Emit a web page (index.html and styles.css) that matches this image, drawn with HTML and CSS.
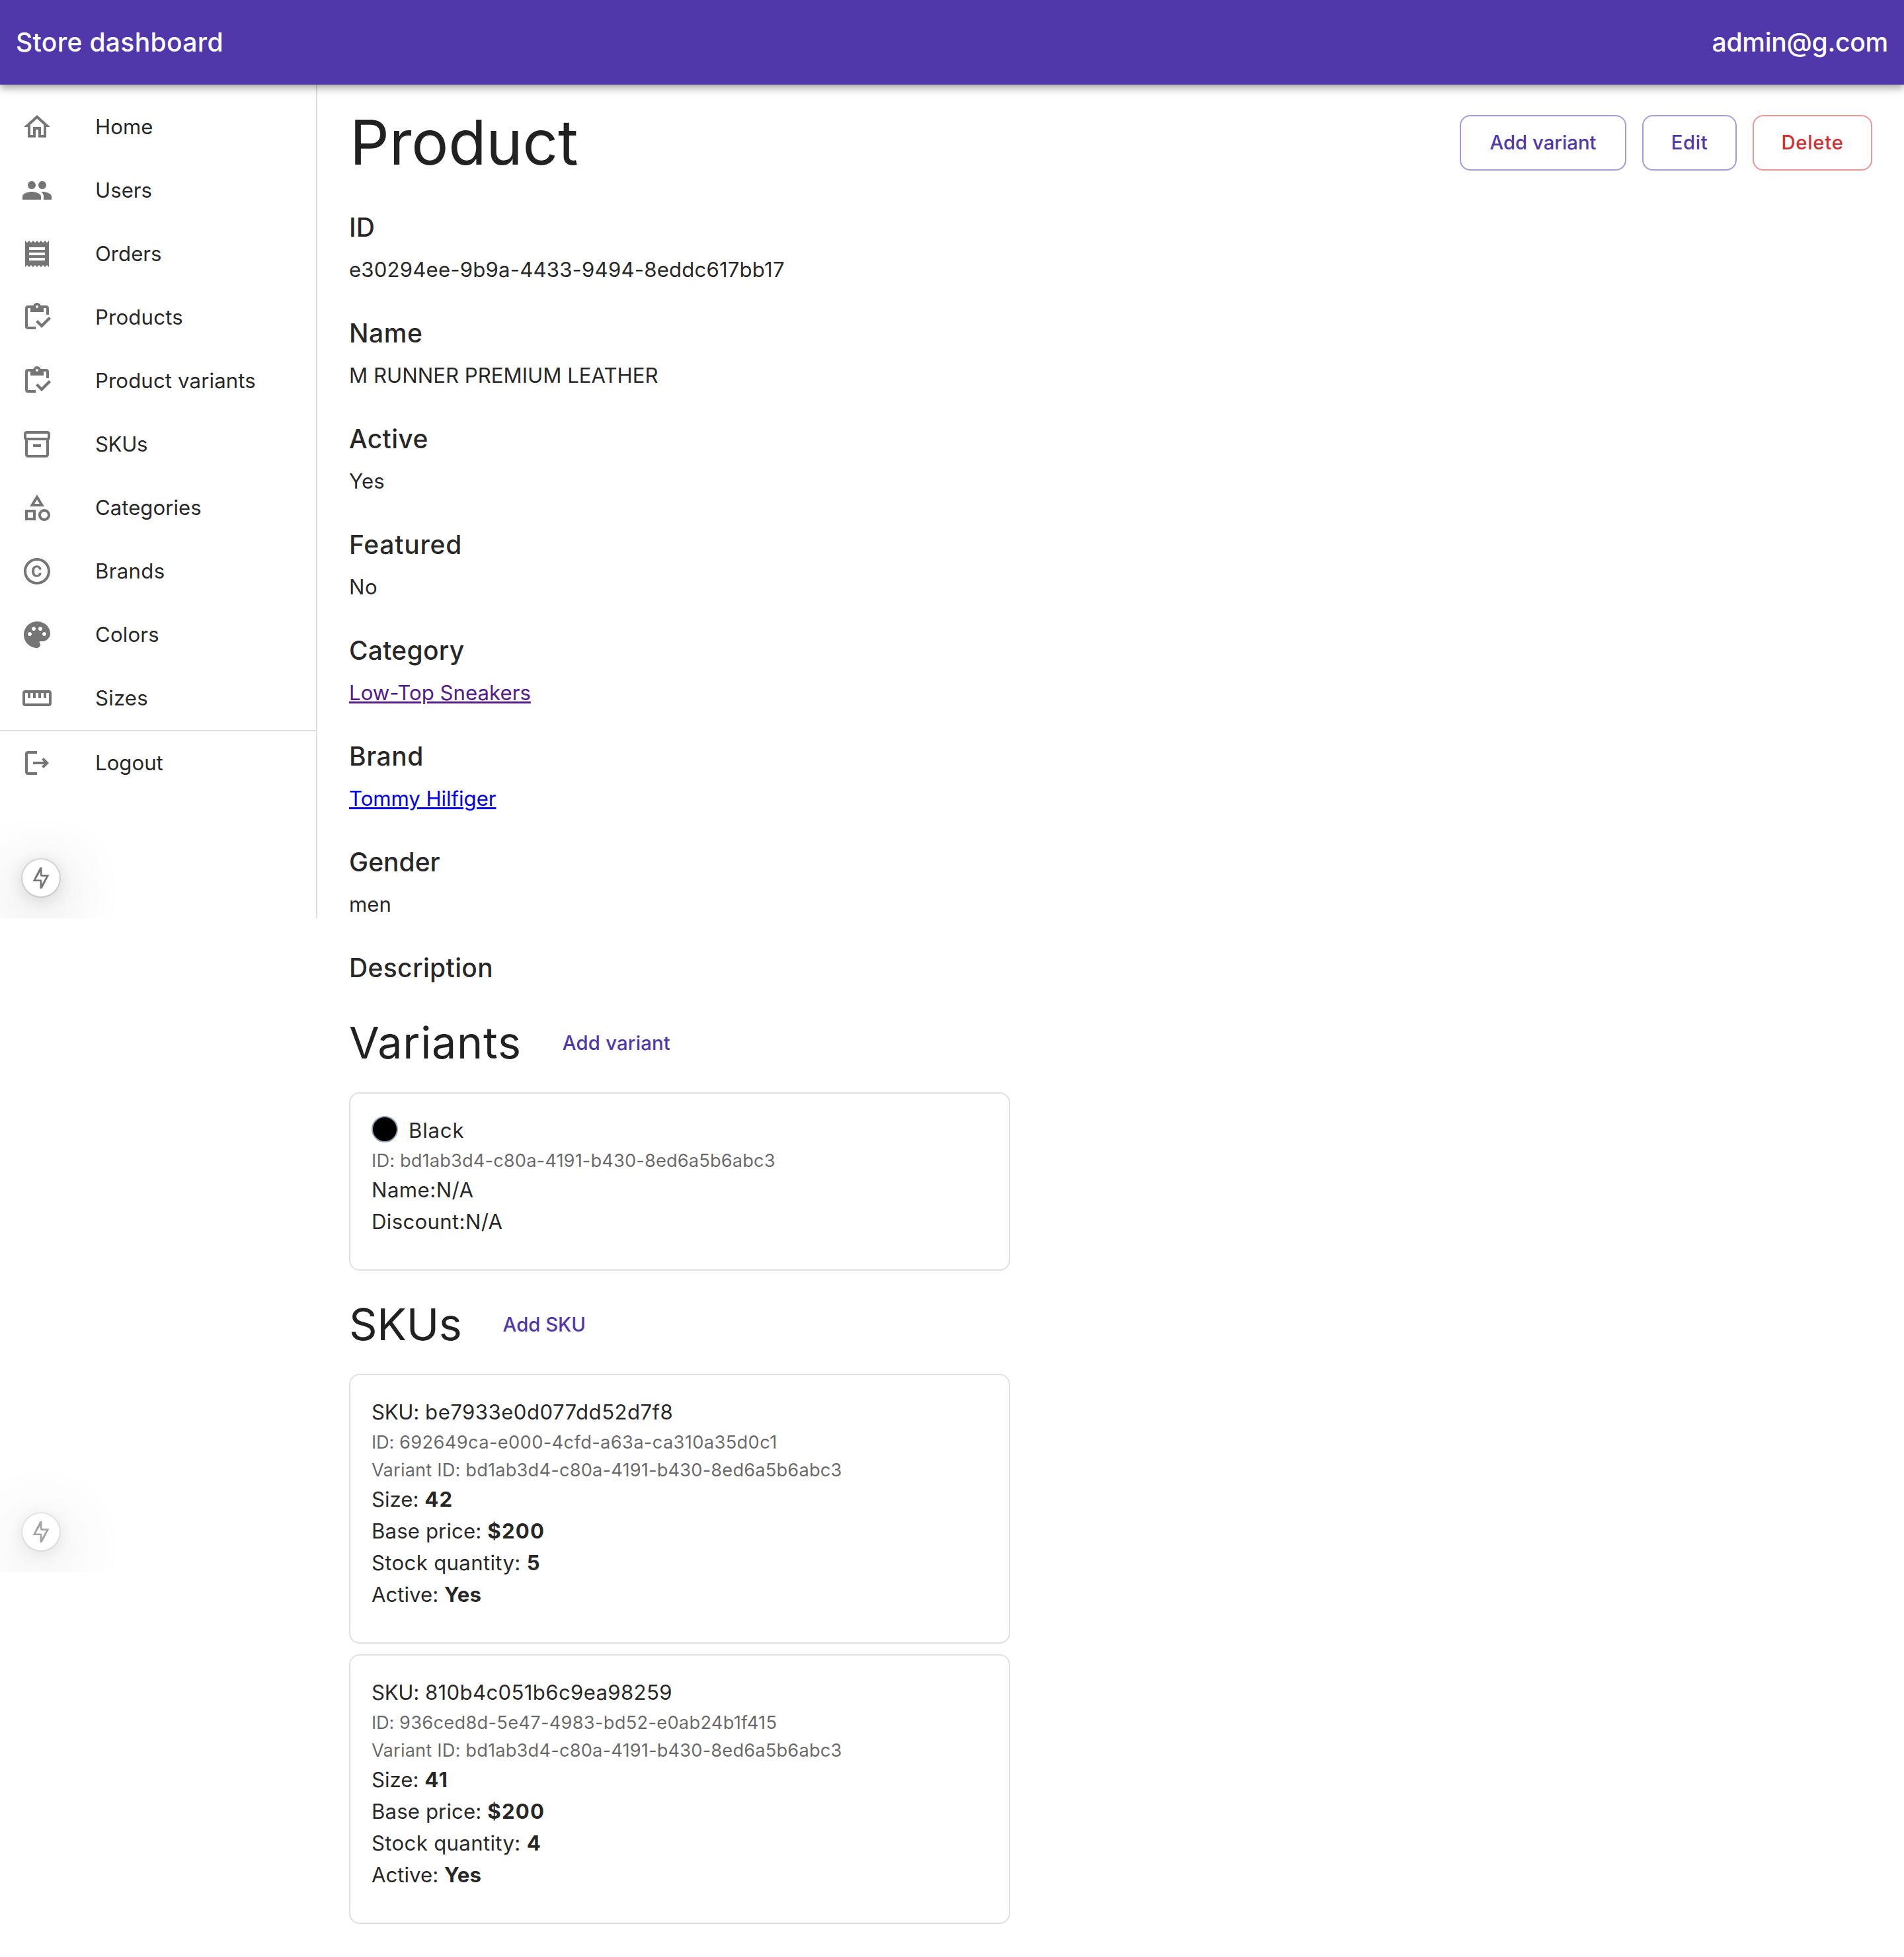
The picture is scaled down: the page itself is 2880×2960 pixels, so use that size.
FILE: index.html
```html
<!DOCTYPE html>
<html lang="en">
<head>
<meta charset="utf-8">
<title>Store dashboard</title>
<link rel="stylesheet" href="styles.css">
</head>
<body>
<header class="app-bar">
  <span class="app-title track-9">Store dashboard</span>
  <span class="app-user">admin@g.com</span>
</header>

<div class="layout">
  <nav class="sidebar">
    <ul class="nav-list">
      <li class="nav-item"><svg class="icon" viewBox="0 0 24 24"><path d="m12 5.69 5 4.5V18h-2v-6H9v6H7v-7.81l5-4.5M12 3 2 12h3v8h6v-6h2v6h6v-8h3L12 3z"/></svg><span>Home</span></li>
      <li class="nav-item"><svg class="icon" viewBox="0 0 24 24"><path d="M16 11c1.66 0 2.99-1.34 2.99-3S17.66 5 16 5c-1.66 0-3 1.34-3 3s1.34 3 3 3zm-8 0c1.66 0 2.99-1.34 2.99-3S9.66 5 8 5C6.34 5 5 6.34 5 8s1.34 3 3 3zm0 2c-2.33 0-7 1.17-7 3.5V19h14v-2.5c0-2.33-4.67-3.5-7-3.5zm8 0c-.29 0-.62.02-.97.05 1.16.84 1.97 1.97 1.97 3.45V19h6v-2.5c0-2.33-4.67-3.5-7-3.5z"/></svg><span>Users</span></li>
      <li class="nav-item"><svg class="icon" viewBox="0 0 24 24"><path d="M18 17H6v-2h12v2zm0-4H6v-2h12v2zm0-4H6V7h12v2zM3 22l1.5-1.5L6 22l1.5-1.5L9 22l1.5-1.5L12 22l1.5-1.5L15 22l1.5-1.5L18 22l1.5-1.5L21 22V2l-1.5 1.5L18 2l-1.5 1.5L15 2l-1.5 1.5L12 2l-1.5 1.5L9 2 7.5 3.5 6 2 4.5 3.5 3 2v20z"/></svg><span>Orders</span></li>
      <li class="nav-item"><svg class="icon" viewBox="0 0 24 24"><path d="M5 5h2v3h10V5h2v5h2V5c0-1.1-.9-2-2-2h-4.18C14.4 1.84 13.3 1 12 1s-2.4.84-2.82 2H5c-1.1 0-2 .9-2 2v14c0 1.1.9 2 2 2h6v-2H5V5zm7-2c.55 0 1 .45 1 1s-.45 1-1 1-1-.45-1-1 .45-1 1-1z"/><path d="M21 11.5 15.51 17l-3.01-3-1.5 1.5 4.51 4.5 7-7z"/></svg><span class="track-5">Products</span></li>
      <li class="nav-item"><svg class="icon" viewBox="0 0 24 24"><path d="M5 5h2v3h10V5h2v5h2V5c0-1.1-.9-2-2-2h-4.18C14.4 1.84 13.3 1 12 1s-2.4.84-2.82 2H5c-1.1 0-2 .9-2 2v14c0 1.1.9 2 2 2h6v-2H5V5zm7-2c.55 0 1 .45 1 1s-.45 1-1 1-1-.45-1-1 .45-1 1-1z"/><path d="M21 11.5 15.51 17l-3.01-3-1.5 1.5 4.51 4.5 7-7z"/></svg><span class="track-4">Product variants</span></li>
      <li class="nav-item"><svg class="icon" viewBox="0 0 24 24"><path d="M20 2H4c-1 0-2 .9-2 2v3.01c0 .72.43 1.34 1 1.69V20c0 1.1 1.1 2 2 2h14c.9 0 2-.9 2-2V8.7c.57-.35 1-.97 1-1.69V4c0-1.1-1-2-2-2zm-1 18H5V9h14v11zm1-13H4V4h16v3z"/><path d="M9 12h6v2H9z"/></svg><span class="track-n10">SKUs</span></li>
      <li class="nav-item"><svg class="icon" viewBox="0 0 24 24"><path d="m12 2-5.5 9h11L12 2zm0 3.84L13.93 9h-3.87L12 5.84zM17.5 13c-2.49 0-4.5 2.01-4.5 4.5s2.01 4.5 4.5 4.5 4.5-2.01 4.5-4.5-2.01-4.5-4.5-4.5zm0 7c-1.38 0-2.5-1.12-2.5-2.5s1.12-2.5 2.5-2.5 2.5 1.12 2.5 2.5-1.12 2.5-2.5 2.5zM3 21.5h8v-8H3v8zm2-6h4v4H5v-4z"/></svg><span>Categories</span></li>
      <li class="nav-item"><svg class="icon" viewBox="0 0 24 24"><path d="M10.08 10.86c.05-.33.16-.62.3-.87s.34-.46.59-.62c.24-.15.54-.22.91-.23.23.01.44.05.63.13.2.09.38.21.52.36s.25.33.34.53.13.42.14.64h1.79c-.02-.47-.11-.9-.28-1.29s-.4-.73-.7-1.01-.66-.5-1.08-.66-.88-.23-1.39-.23c-.65 0-1.22.11-1.7.34s-.88.53-1.2.92-.56.84-.71 1.36S8 11.29 8 11.87v.27c0 .58.08 1.12.23 1.64s.39.97.71 1.35.72.69 1.2.91 1.05.34 1.7.34c.47 0 .91-.08 1.32-.23s.77-.36 1.08-.63.56-.58.74-.94.29-.74.3-1.15h-1.79c-.01.21-.06.4-.15.58s-.21.33-.36.46-.32.23-.52.3c-.19.07-.39.09-.6.1-.36-.01-.66-.08-.89-.23-.25-.16-.45-.37-.59-.62s-.25-.55-.3-.88-.08-.67-.08-1v-.27c0-.35.03-.68.08-1.01zM12 2C6.48 2 2 6.48 2 12s4.48 10 10 10 10-4.48 10-10S17.52 2 12 2zm0 18c-4.41 0-8-3.59-8-8s3.59-8 8-8 8 3.59 8 8-3.59 8-8 8z"/></svg><span class="track-10">Brands</span></li>
      <li class="nav-item"><svg class="icon" viewBox="0 0 24 24"><path d="M12 2C6.49 2 2 6.49 2 12s4.49 10 10 10c1.38 0 2.5-1.12 2.5-2.5 0-.61-.23-1.2-.64-1.67-.08-.1-.13-.21-.13-.33 0-.28.22-.5.5-.5H16c3.31 0 6-2.69 6-6 0-4.96-4.49-9-10-9zm5.5 11c-.83 0-1.5-.67-1.5-1.5s.67-1.5 1.5-1.5 1.5.67 1.5 1.5-.67 1.5-1.5 1.5zm-3-4c-.83 0-1.5-.67-1.5-1.5S13.67 6 14.5 6s1.5.67 1.5 1.5S15.33 9 14.5 9zM5 11.5c0-.83.67-1.5 1.5-1.5s1.5.67 1.5 1.5S7.33 13 6.5 13 5 12.33 5 11.5zm6-4c0 .83-.67 1.5-1.5 1.5S8 8.33 8 7.5 8.67 6 9.5 6s1.5.67 1.5 1.5z"/></svg><span class="track-5">Colors</span></li>
      <li class="nav-item"><svg class="icon" viewBox="0 0 24 24"><path d="M21 6H3c-1.1 0-2 .9-2 2v8c0 1.1.9 2 2 2h18c1.1 0 2-.9 2-2V8c0-1.1-.9-2-2-2zm0 10H3V8h2v4h2V8h2v4h2V8h2v4h2V8h2v4h2V8h2v8z"/></svg><span class="track-5">Sizes</span></li>
      <li class="nav-item nav-item-divided"><svg class="icon" viewBox="0 0 24 24"><path d="m17 8-1.41 1.41L17.17 11H9v2h8.17l-1.58 1.58L17 16l4-4-4-4zM5 5h7V3H5c-1.1 0-2 .9-2 2v14c0 1.1.9 2 2 2h7v-2H5V5z"/></svg><span>Logout</span></li>
    </ul>
    <div class="indicator"><svg class="bolt" viewBox="0 0 56 56"><path fill-rule="evenodd" d="M26.5 12h3v11h11l-11 21h-3V33h-11zM27 18.2 20 30.4h7.3c1.2 0 2 .8 2 2v5.4L36 25.7h-6.9c-1.2 0-2.1-.9-2.1-2z"/></svg></div>
  </nav>

  <main class="content">
    <div class="page-head">
      <h1 class="page-title">Product</h1>
      <div class="actions">
        <button class="btn btn-outlined btn-add">Add variant</button>
        <button class="btn btn-outlined btn-edit track-20">Edit</button>
        <button class="btn btn-outlined btn-danger track-25">Delete</button>
      </div>
    </div>

    <section class="field"><h2 class="label">ID</h2><p class="value track-5">e30294ee-9b9a-4433-9494-8eddc617bb17</p></section>
    <section class="field"><h2 class="label track-15">Name</h2><p class="value">M RUNNER PREMIUM LEATHER</p></section>
    <section class="field"><h2 class="label track-9">Active</h2><p class="value track-5">Yes</p></section>
    <section class="field"><h2 class="label track-20">Featured</h2><p class="value track-15">No</p></section>
    <section class="field"><h2 class="label track-6">Category</h2><p class="value"><a class="link-visited" href="#">Low-Top Sneakers</a></p></section>
    <section class="field"><h2 class="label track-15">Brand</h2><p class="value track-n2"><a class="link" href="#">Tommy Hilfiger</a></p></section>
    <section class="field"><h2 class="label">Gender</h2><p class="value">men</p></section>
    <section class="field"><h2 class="label track-9">Description</h2></section>

    <section class="group">
      <div class="group-head">
        <h2 class="group-title group-title-variants">Variants</h2>
        <button class="btn btn-text track-6">Add variant</button>
      </div>
      <article class="card">
        <div class="swatch-row"><span class="swatch"></span><span class="track-25">Black</span></div>
        <p class="meta track-4">ID: bd1ab3d4-c80a-4191-b430-8ed6a5b6abc3</p>
        <p class="track-15">Name:N/A</p>
        <p class="track-10">Discount:N/A</p>
      </article>
    </section>

    <section class="group">
      <div class="group-head">
        <h2 class="group-title">SKUs</h2>
        <button class="btn btn-text">Add SKU</button>
      </div>
      <article class="card">
        <p class="track-15"><span class="lead">SKU:</span> be7933e0d077dd52d7f8</p>
        <p class="meta track-12"><span class="lead">ID:</span> 692649ca-e000-4cfd-a63a-ca310a35d0c1</p>
        <p class="meta track-5">Variant ID: bd1ab3d4-c80a-4191-b430-8ed6a5b6abc3</p>
        <p>Size: <b class="wide">42</b></p>
        <p class="track-4">Base price: <b class="wide">$200</b></p>
        <p class="track-10">Stock quantity: <b class="wide">5</b></p>
        <p>Active: <b class="track-10">Yes</b></p>
      </article>
      <article class="card">
        <p class="track-10"><span class="lead">SKU:</span> 810b4c051b6c9ea98259</p>
        <p class="meta track-9"><span class="lead">ID:</span> 936ced8d-5e47-4983-bd52-e0ab24b1f415</p>
        <p class="meta track-5">Variant ID: bd1ab3d4-c80a-4191-b430-8ed6a5b6abc3</p>
        <p>Size: <b class="wide">41</b></p>
        <p class="track-4">Base price: <b class="wide">$200</b></p>
        <p class="track-10">Stock quantity: <b class="wide">4</b></p>
        <p>Active: <b class="track-10">Yes</b></p>
      </article>
    </section>
  </main>
</div>

<div class="indicator-layer">
  <div class="indicator indicator-faded"><svg class="bolt" viewBox="0 0 56 56"><path fill-rule="evenodd" d="M26.5 12h3v11h11l-11 21h-3V33h-11zM27 18.2 20 30.4h7.3c1.2 0 2 .8 2 2v5.4L36 25.7h-6.9c-1.2 0-2.1-.9-2.1-2z"/></svg></div>
</div>
</body>
</html>
```
FILE: styles.css
```css
*, *::before, *::after { box-sizing: border-box; }

body {
  margin: 0;
  position: relative;
  background: #fff;
  color: rgba(0, 0, 0, .87);
  font: 400 31.2px/48px Inter, "Liberation Sans", sans-serif;
}

h1, h2, p, ul { margin: 0; padding: 0; }

/* App bar */
.app-bar {
  position: relative;
  z-index: 2;
  display: flex;
  align-items: center;
  justify-content: space-between;
  height: 128px;
  padding: 0 24px;
  background: #5038ab;
  color: #fff;
  font-size: 39px;
  font-weight: 500;
  line-height: 64px;
  box-shadow: 0 4px 8px -2px rgba(0, 0, 0, .2), 0 8px 10px 0 rgba(0, 0, 0, .14), 0 2px 20px 0 rgba(0, 0, 0, .12);
}
.app-user { letter-spacing: -.0065em; }

.layout { display: flex; align-items: flex-start; }

/* Sidebar */
.sidebar {
  position: relative;
  flex: none;
  width: 480px;
  height: 1261px;
  padding-top: 16px;
  overflow: hidden;
  border-right: 2px solid #e0e0e0;
}
.nav-list { list-style: none; }
.nav-item {
  display: flex;
  align-items: center;
  gap: 64px;
  height: 96px;
  padding: 0 32px;
}
.nav-item-divided { height: 98px; border-top: 2px solid #e0e0e0; }
.icon { flex: none; width: 48px; height: 48px; fill: #757575; }

/* Floating status indicator */
.indicator {
  position: absolute;
  left: 34px;
  bottom: 33px;
  width: 56px;
  height: 56px;
  border-radius: 50%;
  background: #fff;
  box-shadow: 0 0 0 2px rgba(0, 0, 0, .1), 0 22px 96px 0 rgba(0, 0, 0, .3), 0 4px 24px 0 rgba(0, 0, 0, .14);
}
.indicator-faded { opacity: .66; }
.bolt { display: block; width: 56px; height: 56px; fill: #757575; }
.indicator-layer {
  position: absolute;
  left: 0;
  top: 2138px;
  width: 400px;
  height: 240px;
  overflow: hidden;
}

/* Content */
.content {
  flex: 1;
  display: flex;
  flex-direction: column;
  gap: 40px;
  padding: 32px 48px 48px;
}
.page-head { display: flex; align-items: center; justify-content: space-between; height: 112px; }
.page-title {
  padding: 0 0 2px 1px;
  font-size: 93.7px;
  font-weight: 400;
  line-height: 110px;
  letter-spacing: -.002em;
}
.actions { display: flex; gap: 24px; }

.btn {
  height: 84px;
  padding: 0 22px;
  border: 0;
  border-radius: 16px;
  background: none;
  color: #5038ab;
  font: 500 29.3px/52px Inter, "Liberation Sans", sans-serif;
}
.btn-outlined { border: 2px solid rgba(80, 56, 171, .5); }
.btn-add { width: 252px; }
.btn-edit { width: 143px; }
.btn-danger { width: 181px; color: #d32f2f; border-color: rgba(211, 47, 47, .5); }

.field { display: flex; flex-direction: column; gap: 8px; }
.label { font-size: 39px; font-weight: 500; line-height: 64px; }
.link { color: #0000ee; }
.link-visited { color: #551a8b; }

.group { display: flex; flex-direction: column; gap: 16px; }
.group-head { display: flex; align-items: center; gap: 40px; height: 84px; margin-bottom: 16px; }
.group-title { padding-bottom: 2px; font-size: 66.4px; font-weight: 400; line-height: 82px; letter-spacing: -.004em; }
.group-title-variants { letter-spacing: .012em; }

.card {
  width: 1000px;
  padding: 32px 32px 48px;
  border: 2px solid #e0e0e0;
  border-radius: 16px;
}
.meta { padding-top: 1px; font-size: 27.3px; line-height: 41px; color: rgba(0, 0, 0, .6); }
.swatch-row { display: flex; gap: 16px; height: 48px; }
.swatch {
  width: 40px;
  height: 40px;
  margin-top: 2px;
  border: 2px solid #94a3b8;
  border-radius: 50%;
  background: #000;
}
b { font-weight: 700; }
.wide { letter-spacing: .04em; }
.lead { letter-spacing: -.01em; }

/* Letter tracking */
.track-n10 { letter-spacing: -.0125em; }
.track-n2 { letter-spacing: -.002em; }
.track-4 { letter-spacing: .0035em; }
.track-5 { letter-spacing: .005em; }
.track-6 { letter-spacing: .0062em; }
.track-9 { letter-spacing: .009em; }
.track-10 { letter-spacing: .01em; }
.track-12 { letter-spacing: .0122em; }
.track-15 { letter-spacing: .0137em; }
.track-20 { letter-spacing: .019em; }
.track-25 { letter-spacing: .025em; }
```
